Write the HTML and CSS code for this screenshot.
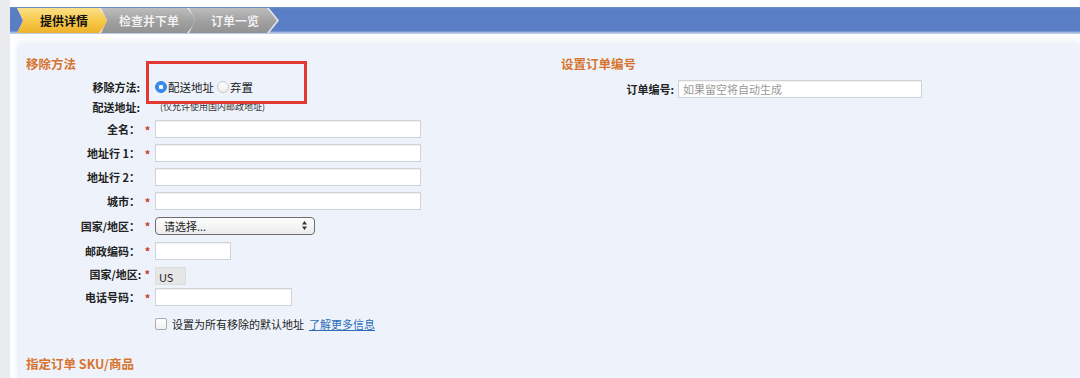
FILE: index.html
```html
<!DOCTYPE html>
<html lang="zh-CN">
<head>
  <meta charset="UTF-8">
  <title>创建移除订单</title>
  <link rel="stylesheet" href="styles.css">
</head>
<body>
  <div class="page">
    <div class="sidebar"></div>
    <div class="main">
      <div class="steps">
        <div class="step step-first active"><div class="step-inner">提供详情</div></div>
        <div class="step step-second"><div class="step-inner">检查并下单</div></div>
        <div class="step step-third"><div class="step-inner">订单一览</div></div>
      </div>

      <div class="panel">
        <div class="highlight"></div>
        <div class="columns">
          <div class="col-left">
            <h2 class="section-title">移除方法</h2>
            <div class="form-grid">
              <div class="label h20">移除方法:</div>
              <div class="star h20"></div>
              <div class="field h20">
                <label class="radio"><span class="radio-dot checked"></span>配送地址</label>
                <label class="radio"><span class="radio-dot"></span>弃置</label>
              </div>

              <div class="label h20">配送地址:</div>
              <div class="star h20"></div>
              <div class="field h20 note">(仅允许使用国内邮政地址)</div>

              <div class="label">全名：</div>
              <div class="star">*</div>
              <div class="field"><input class="text-input wide" type="text"></div>

              <div class="label">地址行 1：</div>
              <div class="star">*</div>
              <div class="field"><input class="text-input wide" type="text"></div>

              <div class="label">地址行 2：</div>
              <div class="star"></div>
              <div class="field"><input class="text-input wide" type="text"></div>

              <div class="label">城市：</div>
              <div class="star">*</div>
              <div class="field"><input class="text-input wide" type="text"></div>

              <div class="label h25">国家/地区：</div>
              <div class="star h25">*</div>
              <div class="field h25">
                <div class="select">请选择...<span class="select-arrow">
                  <svg width="5" height="9" viewBox="0 0 5 9"><path d="M2.5 0L5 3.5H0z M2.5 9L0 5.5h5z" fill="#333"/></svg>
                </span></div>
              </div>

              <div class="label h25">邮政编码：</div>
              <div class="star h25">*</div>
              <div class="field h25"><input class="text-input zip" type="text"></div>

              <div class="label h22 tight">国家/地区: <span class="star-inline">*</span></div>
              <div class="star h22"></div>
              <div class="field h22"><div class="country">US</div></div>

              <div class="label">电话号码：</div>
              <div class="star">*</div>
              <div class="field"><input class="text-input phone" type="text"></div>

              <div class="label h30"></div>
              <div class="star h30"></div>
              <div class="field h30">
                <span class="checkbox"></span>
                <span class="check-text">设置为所有移除的默认地址</span>
                <a class="link" href="#">了解更多信息</a>
              </div>
            </div>
            <h2 class="section-title sku-title">指定订单 SKU/商品</h2>
          </div>

          <div class="col-right">
            <h2 class="section-title">设置订单编号</h2>
            <div class="order-row">
              <div class="order-label">订单编号:</div>
              <input class="text-input order-input" type="text" placeholder="如果留空将自动生成">
            </div>
          </div>
        </div>
      </div>
    </div>
  </div>
</body>
</html>
```

FILE: styles.css
```css
:root {
  --bar-blue: #597ec6;
  --panel-bg: #eef3fb;
  --orange: #d8742f;
  --label-color: #222;
  --star-red: #c8322b;
  --link-blue: #2e6db8;
  --border: #cfd3d8;
}

body {
  margin: 0;
  padding: 0;
  font-family: "Noto Sans CJK SC", "Liberation Sans", sans-serif;
  background-color: #fff;
  color: var(--label-color);
  overflow: hidden;
}

.page {
  display: flex;
  height: 378px;
}

.sidebar {
  width: 10px;
  background-color: #e9ebef;
  flex-shrink: 0;
}

.main {
  flex: 1;
  padding-top: 7px;
  display: flex;
  flex-direction: column;
  min-width: 0;
}

/* step bar */
.steps {
  display: flex;
  align-items: center;
  height: 27px;
  background: linear-gradient(#6f8ec9 0, var(--bar-blue) 2px, var(--bar-blue) 24px, #98b1de 25px, #c7d5ee 27px);
  padding-left: 7px;
}

.step {
  height: 25px;
  background-color: #e4e6ea;
  clip-path: polygon(0 0, calc(100% - 10px) 0, 100% 50%, calc(100% - 10px) 100%, 0 100%, 6px 50%);
}

.step-inner {
  height: 100%;
  margin-right: 2px;
  clip-path: polygon(0 0, calc(100% - 10px) 0, 100% 50%, calc(100% - 10px) 100%, 0 100%, 6px 50%);
  background: linear-gradient(#bdbdbd, #a0a0a0 55%, #929292);
  color: #f2f2f2;
  font-size: 12px;
  font-weight: bold;
  line-height: 25px;
  text-shadow: 0 0 1px rgba(0, 0, 0, 0.15);
  box-sizing: border-box;
}

.step-first {
  width: 94px;
}

.step-first .step-inner {
  background: linear-gradient(#fbe08a, #f7c94a 50%, #efb22b);
  color: #111;
  text-shadow: none;
  padding-left: 23px;
}

.step-second {
  width: 98px;
  margin-left: -10px;
}

.step-second .step-inner {
  padding-left: 18px;
}

.step-third {
  width: 90px;
  margin-left: -10px;
}

.step-third .step-inner {
  padding-left: 22px;
}

/* panel */
.panel {
  position: relative;
  flex: 1;
  margin-top: 10px;
  margin-left: 7px;
  background-color: var(--panel-bg);
  border-top-left-radius: 6px;
  padding: 11px 0 0 9px;
  box-shadow: 0 -3px 6px rgba(200, 212, 232, 0.35);
}

/* red annotation box over the method row */
.highlight {
  position: absolute;
  left: 129px;
  top: 17px;
  width: 155px;
  height: 37px;
  border: 3px solid #e23a33;
  pointer-events: none;
}

.columns {
  display: flex;
}

.col-left {
  width: 535px;
}

.col-right {
  flex: 1;
}

.section-title {
  margin: 0;
  height: 18px;
  line-height: 18px;
  font-size: 12.5px;
  font-weight: bold;
  color: var(--orange);
}

.form-grid {
  display: grid;
  grid-template-columns: 114px 15px 1fr;
  margin-top: 4px;
}

.label,
.star,
.field {
  height: 24px;
  display: flex;
  align-items: center;
}

.label {
  justify-content: flex-end;
  font-size: 11px;
  font-weight: bold;
  white-space: nowrap;
}

.label.tight {
  margin-right: -10px;
}

.star,
.star-inline {
  color: var(--star-red);
  font-size: 11px;
  font-weight: bold;
}

.star {
  justify-content: center;
  padding-top: 1px;
  box-sizing: border-box;
}

.star-inline {
  margin-left: 3px;
}

.h20 { height: 20px; }
.h22 { height: 22px; }
.h25 { height: 25px; }
.h30 { height: 30px; }

.radio {
  display: flex;
  align-items: center;
  font-size: 11.5px;
  color: #222;
  margin-right: 3px;
}

.radio-dot {
  width: 10px;
  height: 10px;
  border-radius: 50%;
  border: 1px solid #c8c8c8;
  background: linear-gradient(#fff, #eee);
  margin-right: 1px;
}

.radio-dot.checked {
  border-color: #2f7de1;
  background: radial-gradient(circle, #fff 0, #fff 2px, #3a8cf0 2.5px);
}

.note {
  align-items: flex-start;
  padding-top: 4px;
  padding-left: 5px;
  box-sizing: border-box;
  font-size: 9px;
  color: #333;
  line-height: 12px;
}

.text-input {
  height: 18px;
  border: 1px solid var(--border);
  background-color: #fff;
  box-sizing: border-box;
  padding: 0 4px;
  font-family: inherit;
  font-size: 11px;
  box-shadow: inset 0 1px 1px rgba(0, 0, 0, 0.06);
  margin: 0;
}

.text-input.wide {
  width: 266px;
}

.text-input.zip {
  width: 76px;
}

.text-input.phone {
  width: 137px;
}

.select {
  position: relative;
  width: 160px;
  height: 18px;
  box-sizing: border-box;
  border: 1px solid #6d6d6d;
  border-radius: 4px;
  background: linear-gradient(#fdfdfd, #ececec);
  font-size: 11px;
  line-height: 16px;
  padding-left: 8px;
  color: #222;
}

.select-arrow {
  position: absolute;
  right: 7px;
  top: 3px;
  line-height: 0;
}

.country {
  width: 31px;
  height: 18px;
  box-sizing: border-box;
  background-color: #e6e6e6;
  border: 1px solid #ddd;
  font-size: 11px;
  line-height: 18px;
  padding-left: 3px;
  color: #222;
  margin-top: 4px;
}

.checkbox {
  width: 10px;
  height: 10px;
  border: 1px solid #aaa;
  border-radius: 2px;
  background: linear-gradient(#fff, #f0f0f0);
  margin-right: 5px;
}

.check-text {
  font-size: 11px;
  color: #222;
  margin-right: 5px;
}

.link {
  font-size: 11px;
  color: var(--link-blue);
  text-decoration: underline;
}

.sku-title {
  margin-top: 16px;
}

.order-row {
  display: flex;
  align-items: center;
  margin-top: 7px;
}

.order-label {
  width: 113px;
  text-align: right;
  font-size: 11px;
  font-weight: bold;
  margin-right: 4px;
}

.order-input {
  width: 244px;
}

.order-input::placeholder {
  color: #999;
}
```
